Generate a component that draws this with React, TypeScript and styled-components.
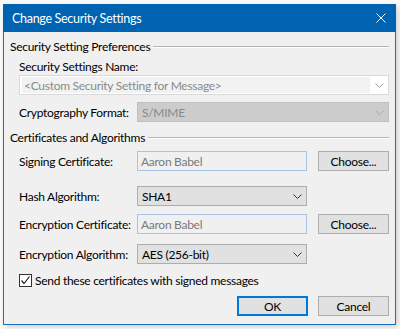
import React from 'react';
import styled, { createGlobalStyle } from 'styled-components';

const GlobalStyle = createGlobalStyle`
  html, body {
    margin: 0;
    padding: 0;
  }
  body {
    font-family: "Segoe UI", Lato, "Open Sans", sans-serif;
    font-size: 12px;
    letter-spacing: -0.28px;
    color: #000;
  }
`;

const Desktop = styled.div`
  width: 400px;
  height: 329px;
  background: #fbfbfb;
  overflow: hidden;
  padding: 4px 0 0 3px;
  box-sizing: border-box;
`;

const Dialog = styled.div`
  width: 393px;
  height: 321px;
  box-sizing: border-box;
  border: 1px solid #1a70c0;
  border-top: none;
  background: #f0f0f0;
  display: flex;
  flex-direction: column;
  box-shadow: 2px 2px 6px rgba(0, 0, 0, 0.18);
`;

const TitleBar = styled.div`
  height: 29px;
  margin: 0 -1px;
  background: #0063b1;
  color: #fff;
  display: flex;
  align-items: center;
  justify-content: space-between;
  padding: 0 10px 0 9px;
  font-size: 12.5px;
  letter-spacing: -0.3px;
`;

const Body = styled.div`
  flex: 1;
  display: flex;
  flex-direction: column;
  padding: 0 6px 8px 6px;
`;

const GroupHeader = styled.div<{ $top: number }>`
  display: flex;
  align-items: center;
  height: 15px;
  margin-top: ${p => p.$top}px;
  gap: 3px;
  white-space: nowrap;
`;

const GroupLine = styled.div`
  flex: 1;
  height: 0;
  border-top: 1px solid #b4b4b4;
  border-bottom: 1px solid #ffffff;
`;

const Indented = styled.div<{ $top: number }>`
  margin-top: ${p => p.$top}px;
  padding-left: 9px;
`;

const FieldLabel = styled.div`
  height: 15px;
  line-height: 15px;
`;

const Row = styled.div<{ $top: number }>`
  margin-top: ${p => p.$top}px;
  padding-left: 9px;
  display: grid;
  grid-template-columns: 118px 170px 1fr;
  align-items: center;
  height: 20px;
`;

const RowLabel = styled.div`
  white-space: nowrap;
`;

const ComboBox = styled.div<{ $variant: 'enabled' | 'disabled' | 'readonly' }>`
  height: 20px;
  box-sizing: border-box;
  display: flex;
  align-items: center;
  border: 1px solid
    ${p => (p.$variant === 'enabled' ? '#adadad' : p.$variant === 'disabled' ? '#bfbfbf' : '#d9d9d9')};
  background: ${p => (p.$variant === 'enabled' ? '#e1e1e1' : p.$variant === 'disabled' ? '#cccccc' : '#ffffff')};
  color: ${p => (p.$variant === 'enabled' ? '#000' : '#8a8a8a')};
  padding-left: 2px;
`;

const ComboText = styled.div<{ $filled?: boolean }>`
  flex: 1;
  align-self: stretch;
  display: flex;
  align-items: center;
  padding-left: 2px;
  margin: 1px 0;
  background: ${p => (p.$filled ? '#f2f2f2' : 'transparent')};
  white-space: nowrap;
  overflow: hidden;
`;

const ComboArrow = styled.div`
  width: 18px;
  display: flex;
  align-items: center;
  justify-content: center;
`;

const SpanCombo = styled.div`
  grid-column: 2 / 4;
`;

const TextBox = styled.div`
  height: 20px;
  box-sizing: border-box;
  border: 1px solid #a9c3e3;
  background: #f0f0f0;
  color: #7a7a7a;
  display: flex;
  align-items: center;
  padding-left: 3px;
`;

const Button = styled.button<{ $default?: boolean }>`
  height: 20px;
  width: 71px;
  justify-self: end;
  box-sizing: border-box;
  font: inherit;
  letter-spacing: inherit;
  color: #000;
  background: #e1e1e1;
  border: ${p => (p.$default ? '2px solid #0078d7' : '1px solid #adadad')};
  padding: 0;
  display: flex;
  align-items: center;
  justify-content: center;
`;

const CheckRow = styled.label`
  margin-top: 10px;
  padding-left: 9px;
  display: flex;
  align-items: center;
  gap: 3px;
  height: 13px;
`;

const CheckBox = styled.span`
  width: 13px;
  height: 13px;
  box-sizing: border-box;
  border: 1px solid #333;
  background: #fff;
  display: flex;
  align-items: center;
  justify-content: center;
`;

const ButtonBar = styled.div`
  margin-top: 9px;
  display: flex;
  justify-content: flex-end;
  gap: 10px;
`;

const Chevron = ({ color }: { color: string }) => (
  <svg width="9" height="5" viewBox="0 0 9 5">
    <polyline points="0.5,0.5 4.5,4.5 8.5,0.5" fill="none" stroke={color} strokeWidth="1" />
  </svg>
);

const CloseIcon = () => (
  <svg width="10" height="10" viewBox="0 0 10 10">
    <path d="M0.5 0.5 L9.5 9.5 M9.5 0.5 L0.5 9.5" stroke="#fff" strokeWidth="1" fill="none" />
  </svg>
);

const CheckMark = () => (
  <svg width="11" height="11" viewBox="0 0 11 11">
    <polyline points="1.5,5.5 4,8.5 9.5,1.5" fill="none" stroke="#222" strokeWidth="1.2" />
  </svg>
);

export default function App() {
  return (
    <>
      <GlobalStyle />
      <Desktop>
        <Dialog>
          <TitleBar>
            <span>Change Security Settings</span>
            <CloseIcon />
          </TitleBar>
          <Body>
            <GroupHeader $top={7}>
              <span>Security Setting Preferences</span>
              <GroupLine />
            </GroupHeader>
            <Indented $top={5}>
              <FieldLabel>Security Settings Name:</FieldLabel>
            </Indented>
            <Indented $top={1}>
              <ComboBox $variant="readonly">
                <ComboText $filled>&lt;Custom Security Setting for Message&gt;</ComboText>
                <ComboArrow>
                  <Chevron color="#a0a0a0" />
                </ComboArrow>
              </ComboBox>
            </Indented>
            <Row $top={7}>
              <RowLabel>Cryptography Format:</RowLabel>
              <SpanCombo>
                <ComboBox $variant="disabled">
                  <ComboText>S/MIME</ComboText>
                  <ComboArrow>
                    <Chevron color="#a8a8a8" />
                  </ComboArrow>
                </ComboBox>
              </SpanCombo>
            </Row>
            <GroupHeader $top={8}>
              <span>Certificates and Algorithms</span>
              <GroupLine />
            </GroupHeader>
            <Row $top={6}>
              <RowLabel>Signing Certificate:</RowLabel>
              <TextBox>Aaron Babel</TextBox>
              <Button>Choose...</Button>
            </Row>
            <Row $top={15}>
              <RowLabel>Hash Algorithm:</RowLabel>
              <ComboBox $variant="enabled">
                <ComboText>SHA1</ComboText>
                <ComboArrow>
                  <Chevron color="#333" />
                </ComboArrow>
              </ComboBox>
            </Row>
            <Row $top={8}>
              <RowLabel>Encryption Certificate:</RowLabel>
              <TextBox>Aaron Babel</TextBox>
              <Button>Choose...</Button>
            </Row>
            <Row $top={10}>
              <RowLabel>Encryption Algorithm:</RowLabel>
              <ComboBox $variant="enabled">
                <ComboText>AES (256-bit)</ComboText>
                <ComboArrow>
                  <Chevron color="#333" />
                </ComboArrow>
              </ComboBox>
            </Row>
            <CheckRow>
              <CheckBox>
                <CheckMark />
              </CheckBox>
              <span>Send these certificates with signed messages</span>
            </CheckRow>
            <ButtonBar>
              <Button $default>OK</Button>
              <Button>Cancel</Button>
            </ButtonBar>
          </Body>
        </Dialog>
      </Desktop>
    </>
  );
}
